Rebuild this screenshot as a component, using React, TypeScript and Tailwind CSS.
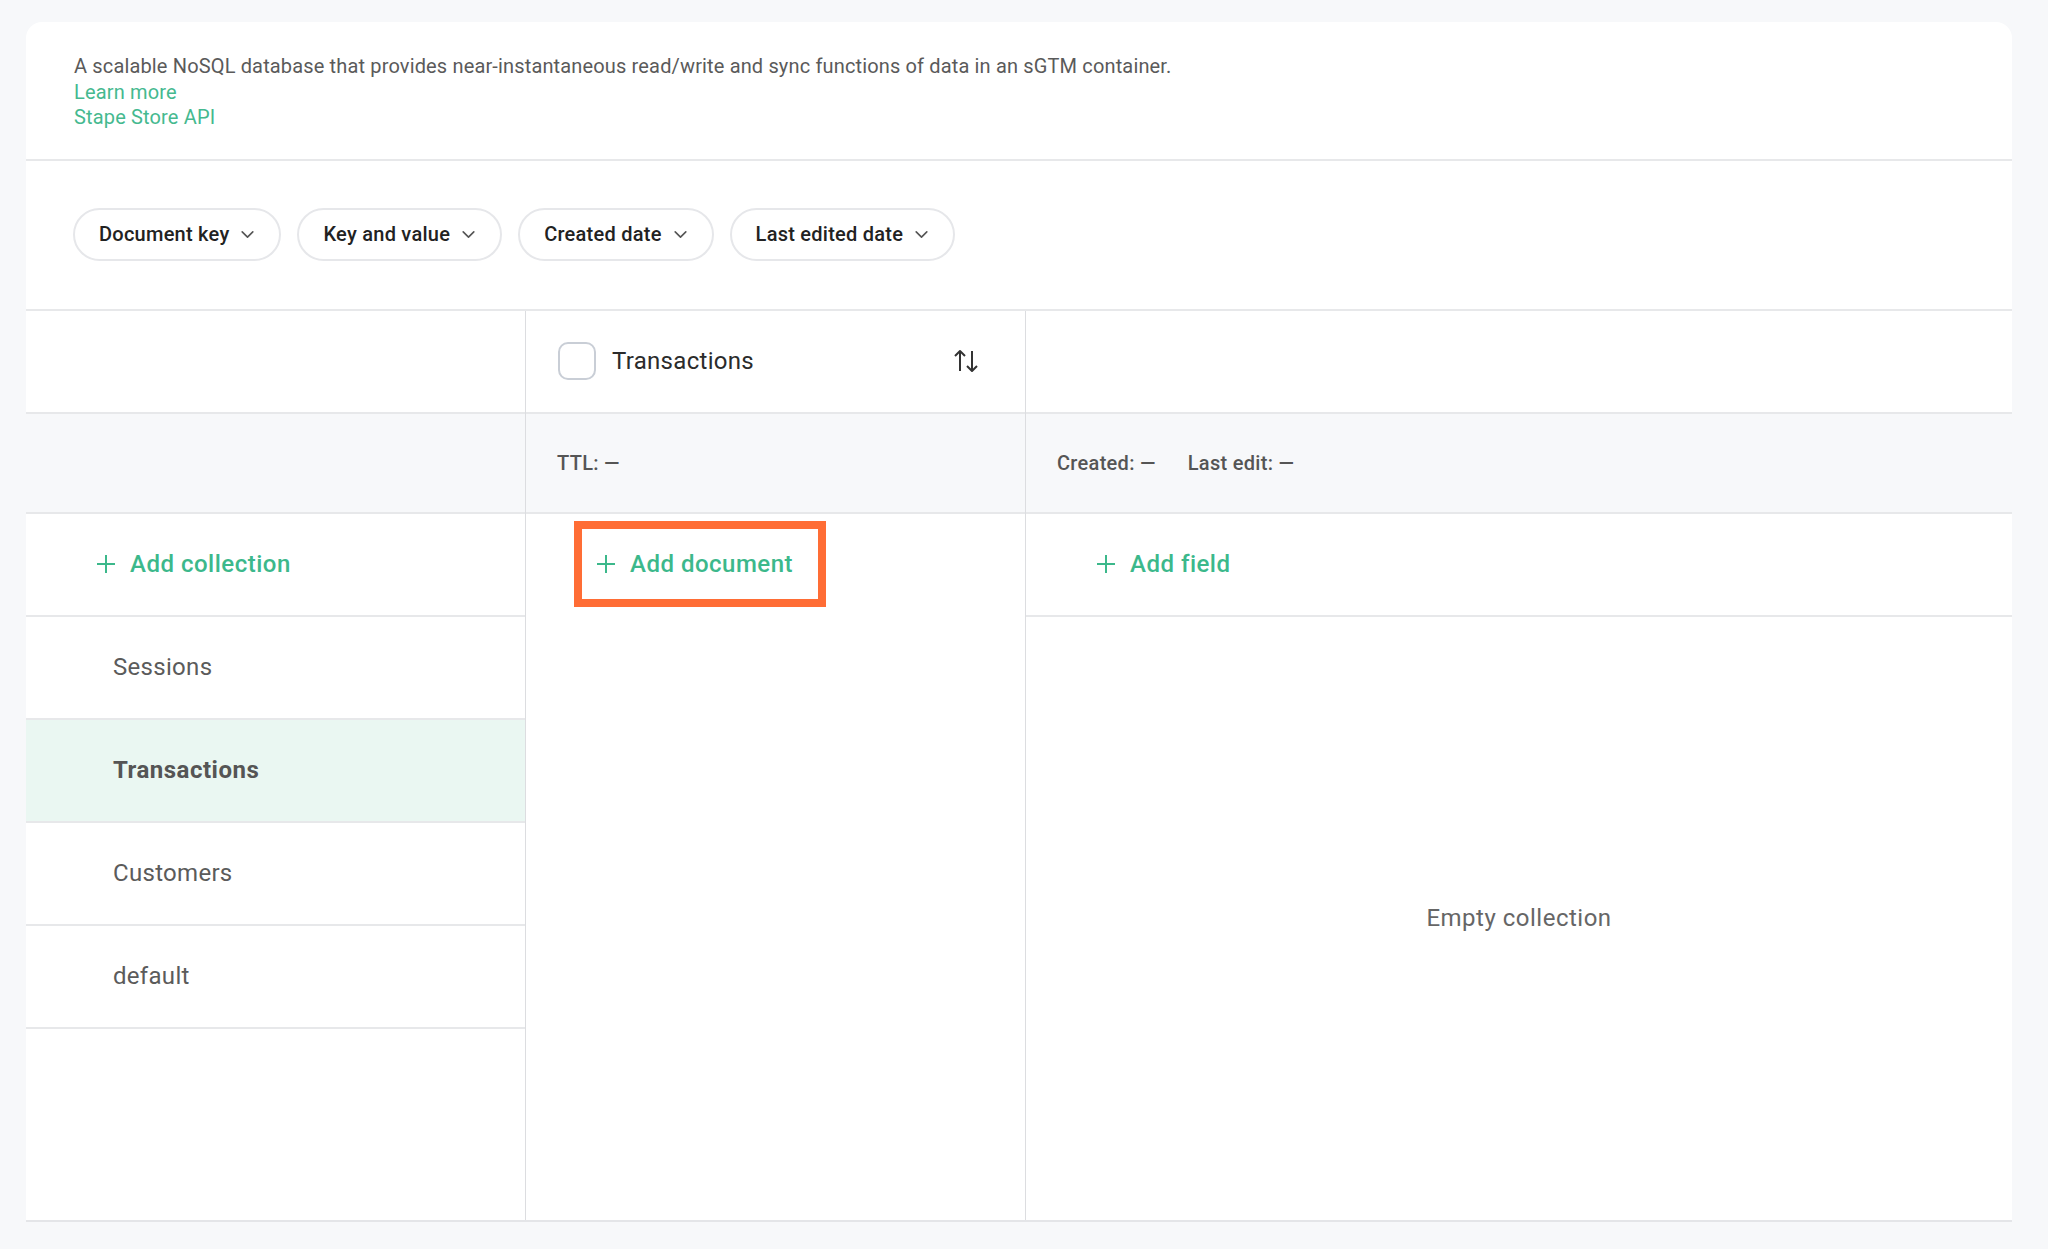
import React from "react";

const Chevron = () => (
  <svg width="17" height="17" viewBox="0 0 16 16" fill="none" className="shrink-0">
    <path d="M3 5.5 8 10.5 13 5.5" stroke="#555" strokeWidth="1.5" strokeLinecap="round" strokeLinejoin="round" />
  </svg>
);

const Plus = () => (
  <svg width="20" height="20" viewBox="0 0 20 20" fill="none" className="shrink-0">
    <path d="M10 1v18M1 10h18" stroke="#3cb88b" strokeWidth="2" />
  </svg>
);

const SortIcon = () => (
  <svg width="26" height="24" viewBox="0 0 26 24" fill="none">
    <path d="M7 22V2M2 7l5-5 5 5" stroke="#333" strokeWidth="2" strokeLinejoin="round" />
    <path d="M19 6v20M14 21l5 5 5-5" stroke="#333" strokeWidth="2" strokeLinejoin="round" transform="translate(0 -4)" />
  </svg>
);

const Pill = ({ label }: { label: string }) => (
  <button className="h-[53px] rounded-full border-2 border-[#e6e7ea] bg-white pl-[24px] pr-[23px] flex items-center gap-[10px] text-[20px] tracking-[0.25px] font-medium text-[#222]">
    <span>{label}</span>
    <Chevron />
  </button>
);

const AddButton = ({ label }: { label: string }) => (
  <div className="flex items-center gap-[14px] text-[24px] tracking-[0.5px] text-[#3cb88b] font-medium">
    <Plus />
    <span>{label}</span>
  </div>
);

export default function App() {
  const collections = ["Sessions", "Transactions", "Customers", "default"];
  return (
    <div className="min-h-screen bg-[#f7f8fa] pt-[22px] pl-[26px] pr-[36px] pb-[27px] font-['Roboto',sans-serif]">
      <div className="bg-white rounded-t-[16px] h-[1200px] flex flex-col">
        <div className="px-[48px] pt-[32px] pb-[28px] border-b-2 border-[#e7e8ea] text-[20px] tracking-[0.15px] leading-[25.5px]">
          <p className="text-[#5a5a5a]">
            A scalable NoSQL database that provides near-instantaneous read/write and sync functions of data in an sGTM container.
          </p>
          <p className="text-[#45b98f]">Learn more</p>
          <p className="text-[#45b98f]">Stape Store API</p>
        </div>
        <div className="px-[47px] pt-[47px] pb-[48px] border-b-2 border-[#e7e8ea] flex gap-[16px]">
          <Pill label="Document key" />
          <Pill label="Key and value" />
          <Pill label="Created date" />
          <Pill label="Last edited date" />
        </div>
        <div className="flex flex-1 border-b-2 border-[#e4e5e8]">
          {/* Column 1 */}
          <div className="w-[500px] border-r border-[#dcdde0] flex flex-col">
            <div className="h-[103px] border-b-2 border-[#e7e8ea]" />
            <div className="h-[100px] border-b-2 border-[#e7e8ea] bg-[#f7f8fa]" />
            <div className="h-[103px] border-b-2 border-[#e7e8ea] pl-[70px] flex items-center">
              <AddButton label="Add collection" />
            </div>
            {collections.map((c) => (
              <div
                key={c}
                className={
                  c === "Transactions"
                    ? "h-[103px] border-b-2 border-[#e7e8ea] pl-[87px] flex items-center text-[24px] tracking-[0.5px] font-bold text-[#555] bg-[#eaf7f2]"
                    : "h-[103px] border-b-2 border-[#e7e8ea] pl-[87px] flex items-center text-[24px] tracking-[0.3px] text-[#5b5b5b]"
                }
              >
                {c}
              </div>
            ))}
          </div>
          {/* Column 2 */}
          <div className="w-[500px] border-r border-[#dcdde0] flex flex-col">
            <div className="h-[103px] border-b-2 border-[#e7e8ea] pl-[32px] pr-[46px] flex items-center justify-between">
              <div className="flex items-center gap-[16px]">
                <div className="w-[38px] h-[38px] rounded-[10px] border-2 border-[#c9ced6] bg-white" />
                <span className="text-[24px] tracking-[0.3px] text-[#2b2b2b]">Transactions</span>
              </div>
              <SortIcon />
            </div>
            <div className="h-[100px] border-b-2 border-[#e7e8ea] bg-[#f7f8fa] pl-[31px] flex items-center text-[20px] tracking-[0.3px] font-medium text-[#555]">
              TTL: —
            </div>
            <div className="h-[103px] pl-[48px] pt-[7px] pb-[10px] flex items-stretch">
              <div className="border-[8px] border-[#ff6d35] pl-[14px] pr-[25px] flex items-center">
                <AddButton label="Add document" />
              </div>
            </div>
          </div>
          {/* Column 3 */}
          <div className="flex-1 flex flex-col">
            <div className="h-[103px] border-b-2 border-[#e7e8ea]" />
            <div className="h-[100px] border-b-2 border-[#e7e8ea] bg-[#f7f8fa] pl-[31px] flex items-center gap-[32px] text-[20px] tracking-[0.3px] font-medium text-[#555]">
              <span>Created: —</span>
              <span>Last edit: —</span>
            </div>
            <div className="h-[103px] border-b-2 border-[#e7e8ea] pl-[70px] flex items-center">
              <AddButton label="Add field" />
            </div>
            <div className="flex-1 flex items-center justify-center text-[24px] tracking-[0.5px] text-[#666]">
              Empty collection
            </div>
          </div>
        </div>
      </div>
    </div>
  );
}
